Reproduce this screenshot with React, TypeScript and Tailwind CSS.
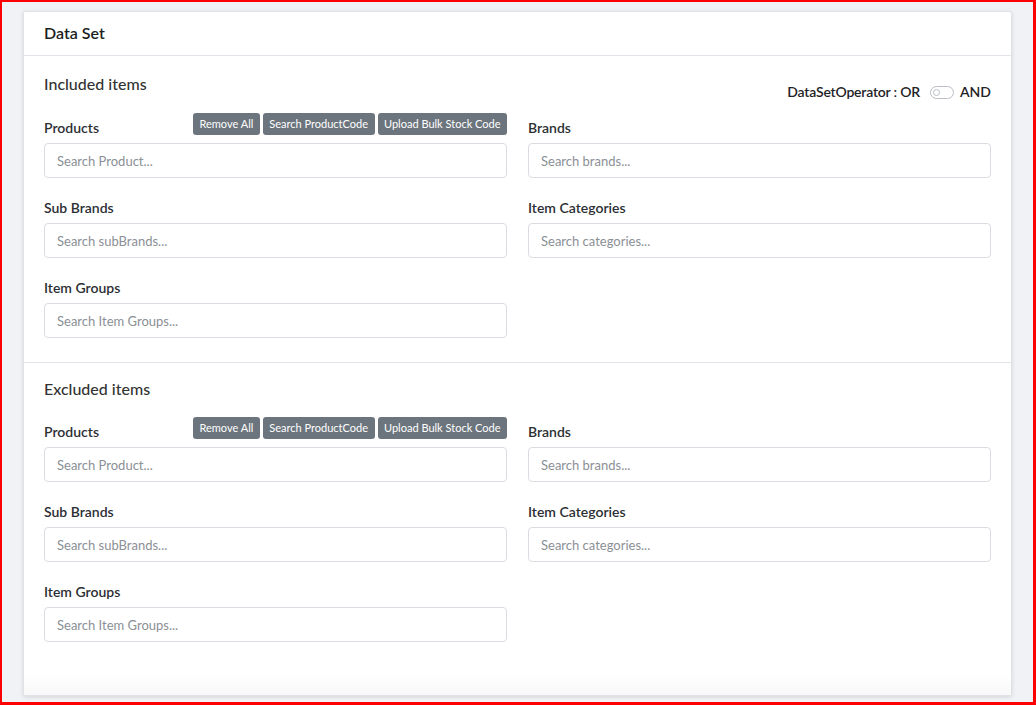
import React from 'react';

const FONT = { fontFamily: 'Lato, "Noto Sans", sans-serif' };

function SmallButton({ children }: { children: React.ReactNode }) {
  return (
    <button
      type="button"
      className="h-[22px] rounded-[3px] bg-[#6c757d] px-[6.5px] text-[11px] leading-[22px] text-white"
    >
      {children}
    </button>
  );
}

function Field({ label, placeholder, actions }: { label: string; placeholder: string; actions?: boolean }) {
  return (
    <div>
      <div className="flex h-[30px] items-start justify-between">
        <label className="mt-[5px] text-[14px] font-semibold leading-5 text-[#2b2f33]">{label}</label>
        {actions && (
          <div className="flex gap-[3px]">
            <SmallButton>Remove All</SmallButton>
            <SmallButton>Search ProductCode</SmallButton>
            <SmallButton>Upload Bulk Stock Code</SmallButton>
          </div>
        )}
      </div>
      <input
        type="text"
        placeholder={placeholder}
        className="h-[35px] w-full rounded-[4px] border border-[#d9dde2] bg-white px-3 text-[13px] text-[#333] outline-none placeholder:text-[#8b9096]"
      />
    </div>
  );
}

function ItemsSection({ title, withOperator }: { title: string; withOperator?: boolean }) {
  return (
    <div>
      <div className={`flex items-start justify-between ${withOperator ? 'h-[41px]' : 'h-[40px]'}`}>
        <h3 className="text-[16px] font-medium leading-6 text-[#333]">{title}</h3>
        {withOperator && (
          <div className="mt-[10px] flex items-center text-[14px] font-semibold leading-5 text-[#1f2326]">
            <span className="tracking-[-0.2px]">DataSetOperator : OR</span>
            <span className="relative ml-[10px] inline-block h-[13px] w-[24px] rounded-full border border-[#b9bec4] bg-white">
              <span className="absolute left-[2px] top-[2px] h-[7px] w-[7px] rounded-full border border-[#b9bec4]" />
            </span>
            <span className="ml-[6px]">AND</span>
          </div>
        )}
      </div>
      <div className="grid grid-cols-2 gap-x-[21px] gap-y-[15px]">
        <Field label="Products" placeholder="Search Product..." actions />
        <Field label="Brands" placeholder="Search brands..." />
        <Field label="Sub Brands" placeholder="Search subBrands..." />
        <Field label="Item Categories" placeholder="Search categories..." />
        <Field label="Item Groups" placeholder="Search Item Groups..." />
      </div>
    </div>
  );
}

export default function App() {
  return (
    <div
      className="h-[705px] w-[1036px] overflow-hidden border-b-[3px] border-l-2 border-r-[3px] border-t-2 border-[#ff0000] bg-[#f1f2f5] px-[21px] pt-[9px]"
      style={FONT}
    >
      <div className="rounded-[2px] border border-[#dfe2e6] bg-white shadow-[0_1px_4px_rgba(0,0,0,0.12)]">
        <div className="flex h-[44px] items-center border-b border-[#e1e4e8] px-5">
          <h2 className="-mt-[2px] text-[16px] font-semibold text-[#1b1e21]">Data Set</h2>
        </div>
        <div className="border-b border-[#e1e4e8] px-5 pb-6 pt-4">
          <ItemsSection title="Included items" withOperator />
        </div>
        <div className="px-5 pt-[14px]">
          <ItemsSection title="Excluded items" />
        </div>
        <div className="h-[32px]" />
        <div className="h-[21px] bg-gradient-to-b from-white to-[#f8f8f9]" />
      </div>
    </div>
  );
}
